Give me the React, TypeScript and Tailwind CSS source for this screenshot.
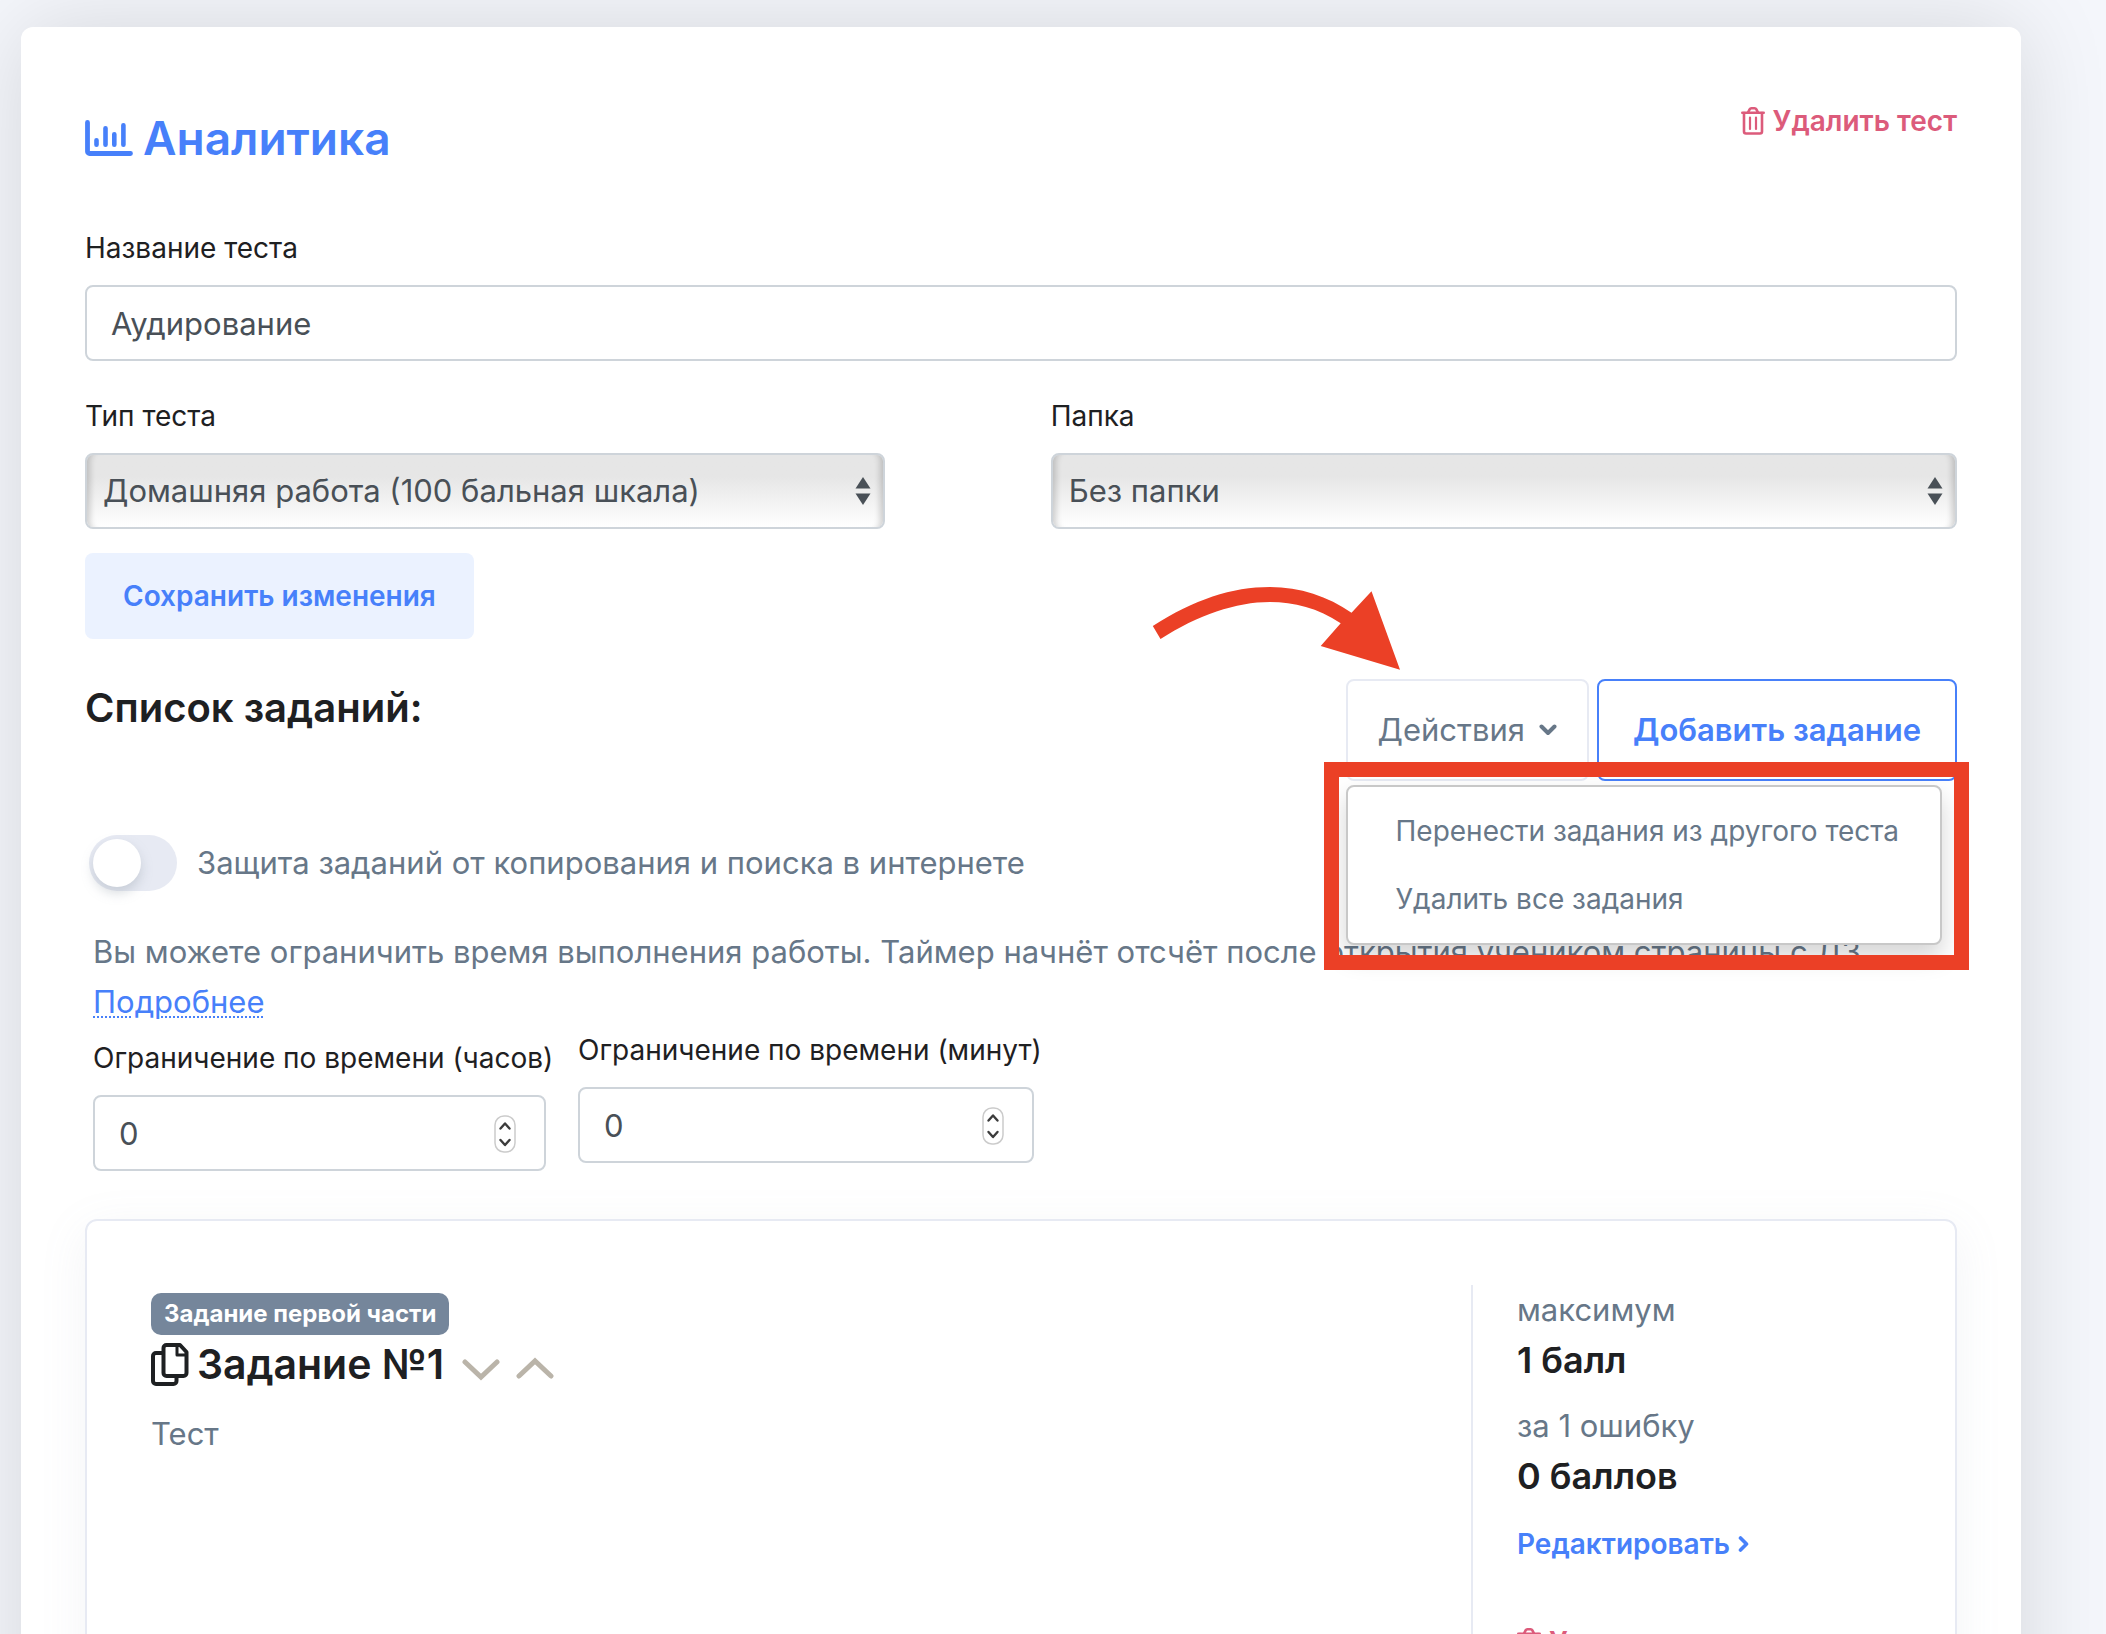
import { useState } from 'react'
import type { ReactNode } from 'react'

const LABEL = 'block text-[28px] leading-[42px] text-[#1e2022]'
const FIELD = 'h-[76px] w-full rounded-lg border-2 border-[#ced4da] text-[31px] text-[#495057] outline-none'

function ChartIcon() {
  return (
    <svg width="48" height="36" viewBox="0 0 48 36" fill="none" stroke="currentColor" strokeLinecap="round" aria-hidden="true">
      <path d="M2.5 2.5V31.5a2 2 0 0 0 2 2H45.5" strokeWidth="4.8" strokeLinejoin="round" />
      <path d="M11.5 20.2V24.8M20.5 8.2V24.8M29.3 14.2V24.8M38.4 5.2V24.8" strokeWidth="4.6" />
    </svg>
  )
}

function TrashIcon() {
  return (
    <svg width="24" height="28" viewBox="0 0 24 28" fill="none" stroke="currentColor" strokeLinecap="round" aria-hidden="true">
      <path d="M1.3 5.8H22.7" strokeWidth="2.6" />
      <path d="M7 5.5L8.6 2.4Q9.2 1.3 10.4 1.3H13.6Q14.8 1.3 15.4 2.4L17 5.5" strokeWidth="2.6" />
      <path d="M3 6V24.5a2 2 0 0 0 2 2H19a2 2 0 0 0 2-2V6" strokeWidth="2.6" />
      <path d="M9 10.5V22M15 10.5V22" strokeWidth="2.2" />
    </svg>
  )
}

function CopyIcon() {
  return (
    <svg width="38" height="43" viewBox="0 0 38 43" fill="none" stroke="currentColor" strokeWidth="4" strokeLinejoin="round" aria-hidden="true">
      <path d="M12 10H5a3 3 0 0 0-3 3V38a3 3 0 0 0 3 3H22.5a3 3 0 0 0 3-3V33.5" />
      <path d="M15.5 2H29L35.5 9V30a3 3 0 0 1-3 3H15.5a3 3 0 0 1-3-3V5a3 3 0 0 1 3-3Z" />
      <path d="M26 2V12H35.5" strokeWidth="3" />
    </svg>
  )
}

function SelectField({ id, label, options }: { id: string; label: string; options: string[] }) {
  return (
    <div>
      <label htmlFor={id} className={`${LABEL} mb-4`}>
        {label}
      </label>
      <div className="relative">
        <select
          id={id}
          className={`${FIELD} appearance-none bg-linear-to-b from-[#e6e6e6] from-30% to-white px-4 shadow-[inset_9px_0_6px_-6px_rgba(0,0,0,0.18),inset_-9px_0_6px_-6px_rgba(0,0,0,0.18)]`}
        >
          {options.map((option) => (
            <option key={option}>{option}</option>
          ))}
        </select>
        <svg className="pointer-events-none absolute top-6 right-3.5" width="16" height="28" viewBox="0 0 16 28" fill="#495057" aria-hidden="true">
          <path d="M8 0L15.5 11.5H0.5Z" />
          <path d="M8 28L0.5 16.5H15.5Z" />
        </svg>
      </div>
    </div>
  )
}

function TimeLimitField({ id, label }: { id: string; label: string }) {
  return (
    <div>
      <label htmlFor={id} className={`${LABEL} mb-4 whitespace-nowrap`}>
        {label}
      </label>
      <div className="relative">
        <input
          id={id}
          type="number"
          defaultValue={0}
          className={`${FIELD} [appearance:textfield] bg-white px-6 [&::-webkit-inner-spin-button]:appearance-none`}
        />
        <svg className="pointer-events-none absolute top-5 right-[30px]" width="22" height="38" viewBox="0 0 22 38" fill="none" aria-hidden="true">
          <rect x="1" y="1" width="20" height="36" rx="9" fill="#fff" stroke="#cbcbcb" strokeWidth="1.5" />
          <path
            d="M6.5 13.5L11 8.5L15.5 13.5M6.5 25L11 30L15.5 25"
            stroke="#3c3c3c"
            strokeWidth="2.4"
            strokeLinecap="round"
            strokeLinejoin="round"
          />
        </svg>
      </div>
    </div>
  )
}

function ScoreRow({ label, children }: { label: string; children: ReactNode }) {
  return (
    <div>
      <dt className="text-[31px] leading-[50px]">{label}</dt>
      <dd className="text-[36px] leading-[50px] font-semibold text-[#1e2022]">{children}</dd>
    </div>
  )
}

function ActionsMenu() {
  return (
    <div className="absolute top-[106px] left-0 z-10 w-[596px] rounded-lg border-2 border-[#c8c8c8] bg-white py-2.5 shadow-[0_12px_24px_rgba(0,0,0,0.17)]">
      <button type="button" className="block w-full px-12 text-left text-[28px] leading-[68px] whitespace-nowrap">
        Перенести задания из другого теста
      </button>
      <button type="button" className="block w-full px-12 text-left text-[28px] leading-[68px] whitespace-nowrap">
        Удалить все задания
      </button>
    </div>
  )
}

export default function App() {
  const [menuOpen, setMenuOpen] = useState(true)

  return (
    <div className="flex h-screen overflow-hidden bg-[#f4f6fb] pt-[27px] pr-[85px] pl-[21px] font-['Inter','Liberation_Sans',sans-serif] text-[#677788]">
      <main className="flex min-w-0 flex-1 flex-col self-start rounded-xl bg-white px-16 pt-[73px] pb-16 shadow-[0_0_90px_rgba(0,0,0,0.13)]">
        <header className="mb-[60px] flex items-start justify-between">
          <h1 className="mt-[9px] text-[46px] leading-[58px] font-semibold text-[#4780fa]">
            <a href="#analytics" className="flex items-center gap-2.5">
              <ChartIcon />
              Аналитика
            </a>
          </h1>
          <a href="#delete" className="flex items-center gap-2 text-[28px] leading-[42px] font-semibold text-[#dc5b7b]">
            <TrashIcon />
            Удалить тест
          </a>
        </header>

        <div className="mb-[34px]">
          <label htmlFor="name" className={`${LABEL} mb-4`}>
            Название теста
          </label>
          <input id="name" type="text" defaultValue="Аудирование" className={`${FIELD} bg-white px-6`} />
        </div>

        <div className="mb-6 grid grid-cols-[15fr_17fr] gap-[166px]">
          <SelectField id="type" label="Тип теста" options={['Домашняя работа (100 бальная шкала)']} />
          <SelectField id="folder" label="Папка" options={['Без папки']} />
        </div>

        <button type="button" className="mb-10 h-[86px] self-start rounded-lg bg-[#ebf2ff] px-[38px] text-[28px] font-semibold text-[#4780fa]">
          Сохранить изменения
        </button>

        <div className="mb-[54px] flex items-start justify-between">
          <h2 className="text-[40px] leading-[58px] font-semibold text-[#1e2022]">Список заданий:</h2>
          <div className="relative flex gap-2">
            <button
              type="button"
              aria-expanded={menuOpen}
              onClick={() => setMenuOpen(!menuOpen)}
              className="flex h-[102px] items-center gap-3.5 rounded-lg border-2 border-[#e7eaf3] bg-white px-[30px] text-[31px]"
            >
              Действия
              <svg width="18" height="12" viewBox="0 0 18 12" fill="none" stroke="currentColor" strokeWidth="4" strokeLinecap="round" strokeLinejoin="round" aria-hidden="true">
                <path d="M2.5 2.5L9 9L15.5 2.5" />
              </svg>
            </button>
            <button type="button" className="h-[102px] rounded-lg border-2 border-[#4780fa] bg-white px-[34px] text-[31px] font-semibold text-[#4780fa]">
              Добавить задание
            </button>
            {menuOpen && <ActionsMenu />}

            {/* hint marks over the menu */}
            <div className="pointer-events-none absolute top-[83px] -right-3 -left-[22px] z-20 h-[208px] border-[15px] border-[#eb4026]" />
            <svg className="pointer-events-none absolute -top-[93px] -left-[194px]" width="250" height="86" viewBox="0 0 250 86" fill="#eb4026" aria-hidden="true">
              <path d="M0.8 40C42 13.5 80 1 118 1C148 1 176 10.5 199.5 26.7L219.5 5.3L248 83.7L168.7 60L188.7 37.3C166 22 142 16 118 16C84 16 46 29 8.5 53Z" />
            </svg>
          </div>
        </div>

        <label className="mb-9 ml-1 flex items-center gap-5 self-start text-[31px] leading-[56px]">
          <input type="checkbox" className="peer sr-only" />
          <span className="h-14 w-[88px] rounded-full bg-[#e7eaf3] p-1 peer-checked:bg-[#4780fa]">
            <span className="block size-12 rounded-full bg-white shadow-[0_6px_12px_rgba(140,152,164,0.35)]" />
          </span>
          Защита заданий от копирования и поиска в интернете
        </label>

        <p className="ml-2 text-[31px] leading-[50px]">
          Вы можете ограничить время выполнения работы. Таймер начнёт отсчёт после открытия учеником страницы с ДЗ.
          <br />
          <a href="#more" className="text-[#4780fa] underline decoration-dotted decoration-2 underline-offset-3">
            Подробнее
          </a>
        </p>

        <div className="mt-0.5 mb-12 ml-2 flex gap-8">
          <div className="w-[453px] pt-2">
            <TimeLimitField id="hours" label="Ограничение по времени (часов)" />
          </div>
          <div className="w-[456px]">
            <TimeLimitField id="minutes" label="Ограничение по времени (минут)" />
          </div>
        </div>

        <article className="grid grid-cols-[22fr_7fr] rounded-xl border-2 border-[#e7eaf3] p-16 shadow-[0_12px_48px_rgba(140,152,164,0.1)]">
          <div className="pt-2">
            <span className="block w-fit rounded-[10px] bg-[#75869b] px-[13px] text-[24px] leading-[42px] font-bold text-white">
              Задание первой части
            </span>
            <div className="flex items-center text-[#1e2022]">
              <CopyIcon />
              <h3 className="ml-2 text-[41px] leading-[58px] font-semibold">Задание №1</h3>
              <button type="button" aria-label="Переместить ниже" className="ml-[18px] pt-3 text-[#bab4a9]">
                <svg width="38" height="22" viewBox="0 0 38 22" fill="none" stroke="currentColor" strokeWidth="5" strokeLinecap="round" aria-hidden="true">
                  <path d="M3 3L19 18L35 3" />
                </svg>
              </button>
              <button type="button" aria-label="Переместить выше" className="ml-4 pt-2 text-[#bab4a9]">
                <svg width="38" height="22" viewBox="0 0 38 22" fill="none" stroke="currentColor" strokeWidth="5" strokeLinecap="round" aria-hidden="true">
                  <path d="M3 19L19 4L35 19" />
                </svg>
              </button>
            </div>
            <p className="mt-4 text-[31px] leading-[50px]">Тест</p>
          </div>

          <div className="border-l-2 border-[#e7eaf3] pl-11">
            <dl className="flex flex-col gap-4">
              <ScoreRow label="максимум">1 балл</ScoreRow>
              <ScoreRow label="за 1 ошибку">0 баллов</ScoreRow>
            </dl>
            <a href="#edit" className="mt-[22px] flex items-center gap-2 text-[28px] leading-[42px] font-semibold text-[#4780fa]">
              Редактировать
              <svg width="11" height="16" viewBox="0 0 11 16" fill="none" stroke="currentColor" strokeWidth="3.6" strokeLinecap="round" strokeLinejoin="round" aria-hidden="true">
                <path d="M2.5 2L8.5 8L2.5 14" />
              </svg>
            </a>
            <a href="#delete-task" className="mt-14 flex items-center gap-2 text-[28px] leading-[42px] font-semibold text-[#dc5b7b]">
              <TrashIcon />
              Удалить
            </a>
          </div>
        </article>
      </main>
    </div>
  )
}
